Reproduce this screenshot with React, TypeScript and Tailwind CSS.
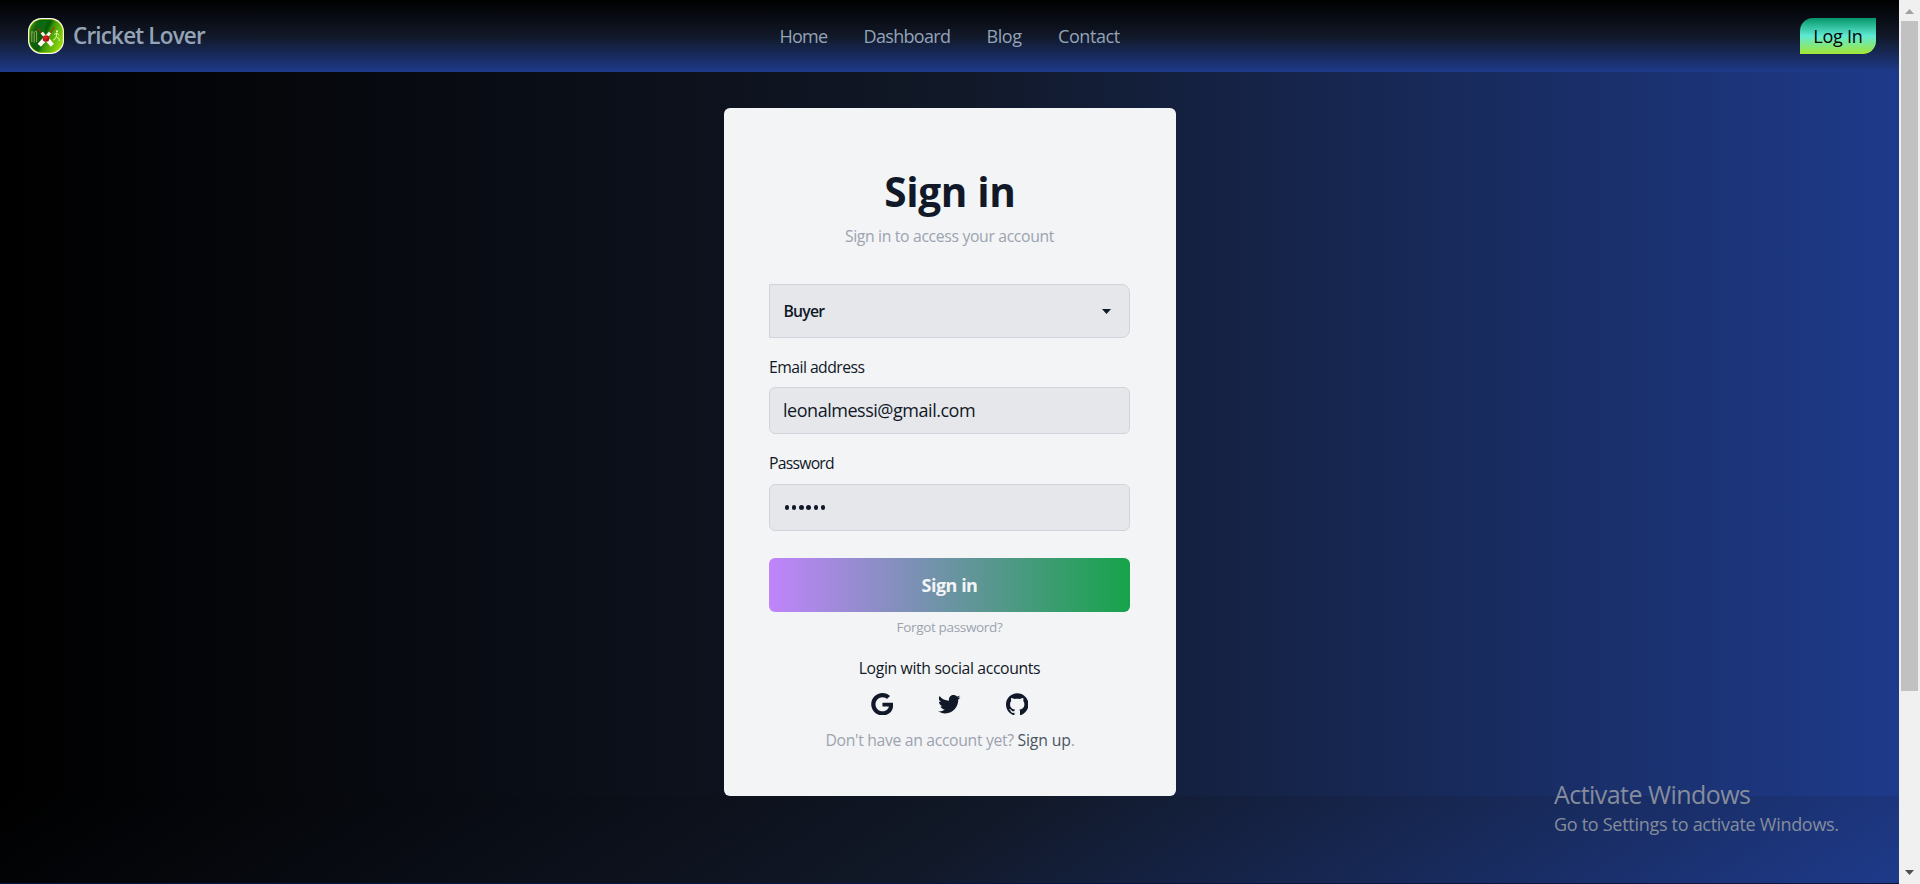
const navItems = [
  { label: "Home", className: "ml-[779.5px] w-[49px] tracking-[-0.75px]" },
  { label: "Dashboard", className: "ml-[35px] w-[87px] tracking-[-0.67px]" },
  { label: "Blog", className: "ml-9 w-[36px] tracking-[-0.45px]" },
  { label: "Contact", className: "ml-[35.5px] w-[62px] tracking-[-0.42px]" },
];

const socials = [
  {
    name: "Google",
    d: "M16.318 13.714v5.484h9.078c-0.37 2.354-2.745 6.901-9.078 6.901-5.458 0-9.917-4.521-9.917-10.099s4.458-10.099 9.917-10.099c3.109 0 5.193 1.318 6.38 2.464l4.339-4.182c-2.786-2.599-6.396-4.182-10.719-4.182-8.844 0-16 7.151-16 16s7.156 16 16 16c9.234 0 15.365-6.49 15.365-15.635 0-1.052-0.115-1.854-0.255-2.651z",
  },
  {
    name: "Twitter",
    d: "M31.937 6.093c-1.177 0.516-2.437 0.871-3.765 1.032 1.355-0.813 2.391-2.099 2.885-3.631-1.271 0.74-2.677 1.276-4.172 1.579-1.192-1.276-2.896-2.079-4.787-2.079-3.625 0-6.563 2.937-6.563 6.557 0 0.521 0.063 1.021 0.172 1.495-5.453-0.255-10.287-2.875-13.52-6.833-0.568 0.964-0.891 2.084-0.891 3.303 0 2.281 1.161 4.281 2.916 5.457-1.073-0.031-2.083-0.328-2.968-0.817v0.079c0 3.181 2.26 5.833 5.26 6.437-0.547 0.145-1.131 0.229-1.724 0.229-0.421 0-0.823-0.041-1.224-0.115 0.844 2.604 3.26 4.5 6.14 4.557-2.239 1.755-5.077 2.801-8.135 2.801-0.521 0-1.041-0.025-1.563-0.088 2.917 1.86 6.36 2.948 10.079 2.948 12.067 0 18.661-9.995 18.661-18.651 0-0.276 0-0.557-0.021-0.839 1.287-0.917 2.401-2.079 3.281-3.396z",
  },
  {
    name: "GitHub",
    d: "M16 0.396c-8.839 0-16 7.167-16 16 0 7.073 4.584 13.068 10.937 15.183 0.803 0.151 1.093-0.344 1.093-0.772 0-0.38-0.009-1.385-0.015-2.719-4.453 0.964-5.391-2.151-5.391-2.151-0.729-1.844-1.781-2.339-1.781-2.339-1.448-0.989 0.115-0.968 0.115-0.968 1.604 0.109 2.448 1.645 2.448 1.645 1.427 2.448 3.744 1.74 4.661 1.328 0.14-1.031 0.557-1.74 1.011-2.135-3.552-0.401-7.287-1.776-7.287-7.907 0-1.751 0.62-3.177 1.645-4.297-0.177-0.401-0.719-2.031 0.141-4.235 0 0 1.339-0.427 4.4 1.641 1.281-0.355 2.641-0.532 4-0.541 1.36 0.009 2.719 0.187 4 0.541 3.043-2.068 4.381-1.641 4.381-1.641 0.859 2.204 0.317 3.833 0.161 4.235 1.015 1.12 1.635 2.547 1.635 4.297 0 6.145-3.74 7.5-7.296 7.891 0.556 0.479 1.077 1.464 1.077 2.959 0 2.14-0.02 3.864-0.02 4.385 0 0.416 0.28 0.916 1.104 0.755 6.4-2.093 10.979-8.093 10.979-15.156 0-8.833-7.161-16-16-16z",
  },
];

function Logo() {
  return (
    <svg className="size-9 shrink-0" viewBox="0 0 36 36">
      <defs>
        <linearGradient id="field" x1="0" y1="0.15" x2="1" y2="0.6">
          <stop offset="0" stopColor="#4a9a08" />
          <stop offset="0.2" stopColor="#0c6410" />
          <stop offset="0.5" stopColor="#0a5c08" />
          <stop offset="0.62" stopColor="#3f9a08" />
          <stop offset="1" stopColor="#8cd80c" />
        </linearGradient>
        <radialGradient id="ball" cx="0.4" cy="0.35" r="0.7">
          <stop offset="0" stopColor="#e82828" />
          <stop offset="1" stopColor="#9c0008" />
        </radialGradient>
      </defs>
      <rect width="36" height="36" rx="13.5" fill="#fff" />
      <rect x="0.9" y="0.9" width="34.2" height="34.2" rx="13" fill="#c5dc1c" />
      <rect x="1.5" y="1.5" width="33" height="33" rx="12.5" fill="url(#field)" />
      <path d="M20 2.5 Q15 9 18 17 Q10 12 9 5 Q14 2 20 2.5Z" fill="#0d6e12" opacity="0.8" />
      <path d="M3.8 14v10M6.2 14.5v10M8.6 14v10M3.5 13.5l2 .8M6.5 14l2.5-1" stroke="#b0b050" strokeWidth="0.9" fill="none" />
      <path d="M16 18.5 9.5 10M20 18.5 26.5 9.5" stroke="#b02a16" strokeWidth="1.2" strokeLinecap="round" />
      <path d="M13.8 14.6 24 27M22 14.6 11.5 27" stroke="#fbfbf0" strokeWidth="3" />
      <path d="M19 21 24.3 27.3M17 21 11.3 27.3" stroke="#fbfbf0" strokeWidth="4.4" />
      <circle cx="18" cy="20.5" r="3.3" fill="url(#ball)" />
      <circle cx="29" cy="13.2" r="1" fill="#f1ffd0" />
      <path d="M28.8 14.5l-.5 4.2 2.8 2 .3 2.3M28.3 18.5l-1.6 3-1.6.6M28.8 15.2l-2.6 1.2M29.2 15.2l1.7 2.3" stroke="#e8f9b0" strokeWidth="0.9" fill="none" />
    </svg>
  );
}

function Header() {
  return (
    <header className="flex h-[72px] shrink-0 items-center bg-[linear-gradient(to_bottom,#000,#111827,#1e3a8a)] text-[18px] text-[#94a3b8]">
      <div className="flex w-0 items-center pl-7">
        <Logo />
        <span className="ml-[9px] whitespace-nowrap text-[22.5px] font-semibold leading-9 tracking-[-0.83px]">Cricket Lover</span>
      </div>
      <nav className="-ml-7 flex flex-1 leading-7">
        {navItems.map((item) => (
          <a key={item.label} className={`${item.className} whitespace-nowrap`}>
            {item.label}
          </a>
        ))}
      </nav>
      <button className="mr-[23px] flex h-9 w-[76px] items-center justify-center whitespace-nowrap rounded-tl-[13px] rounded-br-[13px] bg-[linear-gradient(to_bottom,#059669,#5eead4,#a3e635)] leading-7 tracking-[-0.24px] text-black">
        Log In
      </button>
    </header>
  );
}

function SignInCard() {
  return (
    <form className="flex h-[688px] w-[452px] flex-col rounded-md bg-[#f3f4f6] pt-[64px] pr-[46px] pl-[45px] text-[15.75px] leading-6 text-[#111827]">
      <h1 className="pl-px text-center text-[40.5px] font-bold leading-10 tracking-[-0.34px]">Sign in</h1>
      <p className="mt-3 text-center tracking-[-0.34px] text-[#9ca3af]">Sign in to access your account</p>

      <div className="mt-9 flex h-[54px] items-center justify-between rounded-r-lg border border-[#d1d5db] bg-[#e5e7eb] pr-[18px] pl-[13.5px]">
        <span className="font-semibold tracking-[-0.8px]">Buyer</span>
        <svg className="h-[5px] w-[9px]" viewBox="0 0 9 5">
          <path d="M0 0h9L4.5 5z" fill="currentColor" />
        </svg>
      </div>

      <label className="mt-[17px] tracking-[-0.54px]">Email address</label>
      <div className="mt-2 flex h-[47px] items-center rounded-md border border-[#d1d5db] bg-[#e5e7eb] px-[13px] pb-0.5 text-[18px] tracking-[-0.47px]">
        leonalmessi@gmail.com
      </div>

      <label className="mt-[17px] tracking-[-0.76px]">Password</label>
      <div className="mt-[9px] flex h-[47px] items-center gap-[2.8px] rounded-md border border-[#d1d5db] bg-[#e5e7eb] px-[14.5px]">
        {[0, 1, 2, 3, 4, 5].map((n) => (
          <span key={n} className="size-[4.5px] rounded-full bg-[#111827]" />
        ))}
      </div>

      <button className="mt-[27px] h-[54px] shrink-0 rounded-md bg-[linear-gradient(to_right,#c084fc,#16a34a)] pb-px text-[18px] font-bold tracking-[-0.5px] text-[#f3f4f6]">
        Sign in
      </button>
      <a className="mt-[6px] text-center text-[13.5px] leading-[18px] tracking-[-0.33px] text-[#9ca3af]">Forgot password?</a>

      <p className="mt-5 text-center tracking-[-0.35px]">Login with social accounts</p>
      <div className="mt-[12.5px] flex justify-center gap-[45px]">
        {socials.map((s) => (
          <svg key={s.name} className="size-[22.5px] fill-current" viewBox="0 0 32 32" aria-label={s.name}>
            <path d={s.d} />
          </svg>
        ))}
      </div>
      <p className="mt-[13px] pl-px text-center tracking-[-0.33px] text-[#9ca3af]">
        Don't have an account yet? <a className="tracking-[-0.15px] text-[#4b5563]">Sign up</a>.
      </p>
    </form>
  );
}

function Scrollbar() {
  return (
    <div className="flex w-[21px] shrink-0 flex-col items-center bg-[#f0f0f0] pr-px">
      <svg className="mt-[9px] h-[5px] w-[9px]" viewBox="0 0 9 5">
        <path d="M0 5h9L4.5 0z" fill="#a0a0a0" />
      </svg>
      <div className="mt-[7px] h-[670px] w-[17px] bg-[#c1c1c1]" />
      <svg className="mt-auto mb-[9px] h-[5px] w-[9px]" viewBox="0 0 9 5">
        <path d="M0 0h9L4.5 5z" fill="#505050" />
      </svg>
    </div>
  );
}

export default function App() {
  return (
    <div className="relative flex h-[884px] w-full overflow-hidden font-['Open_Sans','Noto_Sans',sans-serif]">
      <div className="flex min-w-0 flex-1 flex-col">
        <Header />
        <main className="flex h-[724px] shrink-0 justify-center bg-[linear-gradient(to_right,#000,#111827,#1e3a8a)] pt-9 pl-px">
          <SignInCard />
        </main>
        <footer className="h-[88px] border-b border-[#0b1640] bg-[linear-gradient(147deg,#000,#111827,#1e3a8a)]" />
      </div>
      <Scrollbar />
      <div className="absolute top-[777px] left-[1554px] whitespace-nowrap text-[#858d9c]">
        <p className="text-[25px] leading-[34px] tracking-[-0.55px]">Activate Windows</p>
        <p className="text-[18px] leading-[26px] tracking-[-0.29px]">Go to Settings to activate Windows.</p>
      </div>
    </div>
  );
}
